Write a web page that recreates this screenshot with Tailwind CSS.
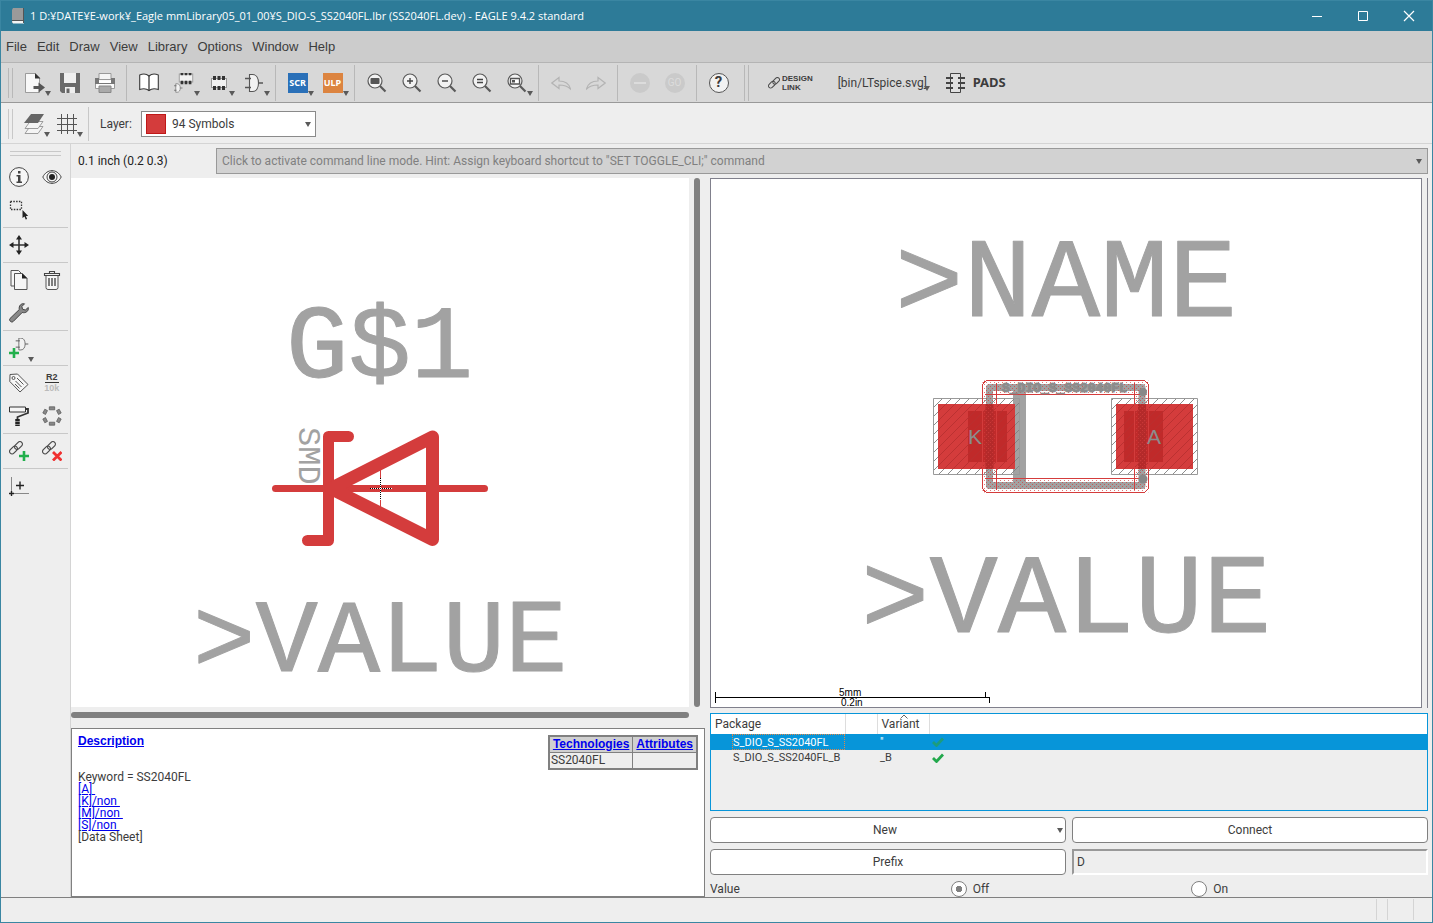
<!DOCTYPE html>
<html lang="en">
<head>
    <meta charset="UTF-8">
    <meta name="viewport" content="width=device-width, initial-scale=1.0">
    <title>EAGLE 9.4.2 standard</title>
    <script src="https://cdn.jsdelivr.net/npm/@tailwindcss/browser@4"></script>
</head>
<body class="h-screen bg-[#eeeeee] font-['Roboto',sans-serif] text-xs text-[#3c3c3c]">
    <!-- Shared symbols -->
    <svg class="hidden">
        <symbol id="caret" viewBox="0 0 6 5"><path d="M0 0h6L3 5z" fill="#5a5a5a"/></symbol>
        <symbol id="lens" viewBox="0 0 20 20">
            <path d="M12.500 12.500l6 6" stroke="#5a5a5a" stroke-width="2.200"/>
            <circle cx="8" cy="8" r="7" fill="#f2f2f2" stroke="#5a5a5a" stroke-width="1.200"/>
        </symbol>
        <symbol id="gate" viewBox="0 0 20 20">
            <path d="M5.500 1.500h3c4 0 6 4 6 8.500s-2 8.500-6 8.500h-3z" fill="#f2f2f2" stroke="#555" stroke-width="1.100"/>
            <path d="M1 5.500h6M1 14.500h6M14.500 10H19" stroke="#555" stroke-width="1.300"/>
        </symbol>
        <symbol id="chain" viewBox="0 0 20 20">
            <g fill="none" stroke="#4a4a4a" stroke-width="1.200">
                <rect x="-4.500" y="-2.500" width="9" height="5" rx="2.500" transform="translate(4.500 9) rotate(-45)"/>
                <rect x="-4.500" y="-2.500" width="9" height="5" rx="2.500" transform="translate(9.500 4.500) rotate(-45)"/>
            </g>
        </symbol>
        <symbol id="chip" viewBox="0 0 20 20">
            <rect x="2.500" y="5.500" width="15" height="9" fill="#f2f2f2" stroke="#999"/>
            <path d="M4 3h3v4H4zM8.500 3h3v4h-3zM13 3h3v4h-3zM4 13h3v4H4zM8.500 13h3v4h-3zM13 13h3v4h-3z" fill="#333"/>
        </symbol>
    </svg>

    <div class="flex h-full flex-col border border-[#3a86a2]">
        <!-- Title bar -->
        <header class="flex h-[30px] shrink-0 items-center bg-[#2d7b98] font-['Open_Sans',sans-serif] text-[11px] text-white">
            <svg class="ml-[11px] mr-1.5 h-4 w-3" viewBox="0 0 12 16">
                <path d="M0 2l1-2h11v15H0z" fill="#9a9a9a"/><path d="M0 13h12v2.500H1z" fill="#f4f4f4"/><path d="M0 12.500h12M11.500 0v15" stroke="#555"/>
            </svg>
            <h1 class="flex-1 truncate">1 D:¥DATE¥E-work¥_Eagle mmLibrary05_01_00¥S_DIO-S_SS2040FL.lbr (SS2040FL.dev) - EAGLE 9.4.2 standard</h1>
            <button aria-label="Minimize" class="flex h-full w-[46px] items-center justify-center"><svg class="size-3" viewBox="0 0 12 12"><path d="M1 6.500h10" stroke="#fff"/></svg></button>
            <button aria-label="Maximize" class="flex h-full w-[46px] items-center justify-center"><svg class="size-3" viewBox="0 0 12 12"><path d="M1.500 1.500h9v9h-9z" fill="none" stroke="#fff"/></svg></button>
            <button aria-label="Close" class="flex h-full w-[46px] items-center justify-center"><svg class="size-3" viewBox="0 0 12 12"><path d="M1 1l10 10M11 1L1 11" stroke="#fff" stroke-width="1.200"/></svg></button>
        </header>

        <!-- Menu -->
        <nav class="flex h-8 shrink-0 items-center gap-2.5 border-b border-[#b4b4b4] bg-[#cccccc] px-[5px] font-['Liberation_Sans',sans-serif] text-[13px]">
            <button>File</button>
            <button>Edit</button>
            <button>Draw</button>
            <button>View</button>
            <button>Library</button>
            <button>Options</button>
            <button>Window</button>
            <button>Help</button>
        </nav>

        <!-- Main toolbar -->
        <div class="flex h-10 shrink-0 items-center border-b border-[#999999] bg-[#d8d8d8] pl-[7px]">
            <div class="mr-1 h-[30px] w-[5px] border-x border-[#b8b8b8]"></div>
            <button aria-label="Open" class="relative flex h-full w-[35px] items-center justify-center">
                <svg class="size-5" viewBox="0 0 20 20"><path d="M.5.5H10l4.500 4.500v14.500H.5z" fill="#f8f8f8" stroke="#888" stroke-width=".8"/><path d="M10 0v5.500h5.500z" fill="#333"/><path d="M8.500 13h5V9.500l6.500 5-6.500 5V16h-5z" fill="#555"/></svg>
                <svg class="absolute bottom-[6px] right-px h-[5px] w-[6px]"><use href="#caret"/></svg>
            </button>
            <button aria-label="Save" class="flex h-full w-[35px] items-center justify-center">
                <svg class="size-5" viewBox="0 0 20 20"><path d="M0 0h20v20H2l-2-2z" fill="#6a6a6a"/><path d="M4 0h12v10H4zM5 14h10v6H5z" fill="#efefef"/><path d="M6.500 15.500h3V20h-3z" fill="#666"/></svg>
            </button>
            <button aria-label="Print" class="flex h-full w-[35px] items-center justify-center">
                <svg class="size-5" viewBox="0 0 20 20"><path d="M4 .5h12V7H4z" fill="#f5f5f5" stroke="#999"/><path d="M.5 6.500h19v9H.5z" fill="#fafafa" stroke="#999"/><path d="M0 5h4v3h12V5h4v6H0z" fill="#777"/><path d="M4 8h12v2H4z" fill="#fff"/><path d="M4 13h12v6.500H4z" fill="#aaa" stroke="#888"/></svg>
            </button>
            <div class="mx-1 h-9 w-px bg-[#b8b8b8]"></div>
            <button aria-label="Library" class="flex h-full w-[35px] items-center justify-center">
                <svg class="h-5 w-5" viewBox="0 0 20 20"><path d="M10 3C7.500.8 3.500.8.700 2v14.500c2.800-1 6.800-1 9.300 1 2.500-2 6.500-2 9.300-1V2c-2.800-1.200-6.800-1.200-9.300 1z" fill="#fff" stroke="#3a3a3a" stroke-width="1.100"/><path d="M10 3v15" stroke="#3a3a3a" stroke-width="1.300"/></svg>
            </button>
            <button aria-label="Device" class="relative flex h-full w-[35px] items-center justify-center">
                <svg class="size-5" viewBox="0 0 20 20"><svg x="3" y="-4" width="18" height="18"><use href="#chip"/></svg><svg x="-1" y="10" width="10" height="10"><use href="#gate"/></svg></svg>
                <svg class="absolute bottom-[6px] right-px h-[5px] w-[6px]"><use href="#caret"/></svg>
            </button>
            <button aria-label="Footprint" class="relative flex h-full w-[35px] items-center justify-center">
                <svg class="size-5"><use href="#chip"/></svg>
                <svg class="absolute bottom-[6px] right-px h-[5px] w-[6px]"><use href="#caret"/></svg>
            </button>
            <button aria-label="Symbol" class="relative flex h-full w-[35px] items-center justify-center">
                <svg class="size-5"><use href="#gate"/></svg>
                <svg class="absolute bottom-[6px] right-px h-[5px] w-[6px]"><use href="#caret"/></svg>
            </button>
            <div class="mx-1 h-9 w-px bg-[#b8b8b8]"></div>
            <button class="relative flex h-full w-[35px] items-center justify-center">
                <span class="flex size-5 items-center justify-center bg-[#2a70b8] font-['Noto_Sans',sans-serif] text-[9px] font-bold text-white">SCR</span>
                <svg class="absolute bottom-[6px] right-px h-[5px] w-[6px]"><use href="#caret"/></svg>
            </button>
            <button class="relative flex h-full w-[35px] items-center justify-center">
                <span class="flex size-5 items-center justify-center bg-[#dc8440] font-['Noto_Sans',sans-serif] text-[9px] font-bold text-white">ULP</span>
                <svg class="absolute bottom-[6px] right-px h-[5px] w-[6px]"><use href="#caret"/></svg>
            </button>
            <div class="mx-1 h-9 w-px bg-[#b8b8b8]"></div>
            <button aria-label="Fit" class="flex h-full w-[35px] items-center justify-center">
                <svg class="size-5" viewBox="0 0 20 20"><use href="#lens"/><rect x="3.500" y="5" width="9" height="6" rx="1" fill="#555"/></svg>
            </button>
            <button aria-label="Zoom in" class="flex h-full w-[35px] items-center justify-center">
                <svg class="size-5" viewBox="0 0 20 20"><use href="#lens"/><path d="M5 8h6M8 5v6" stroke="#444" stroke-width="1.400"/></svg>
            </button>
            <button aria-label="Zoom out" class="flex h-full w-[35px] items-center justify-center">
                <svg class="size-5" viewBox="0 0 20 20"><use href="#lens"/><path d="M5 8h6" stroke="#444" stroke-width="1.400"/></svg>
            </button>
            <button aria-label="Redraw" class="flex h-full w-[35px] items-center justify-center">
                <svg class="size-5" viewBox="0 0 20 20"><use href="#lens"/><path d="M5 6.500h6M5 9.500h6" stroke="#444" stroke-width="1.400"/></svg>
            </button>
            <button aria-label="Zoom select" class="relative flex h-full w-[35px] items-center justify-center">
                <svg class="size-5" viewBox="0 0 20 20"><use href="#lens"/><path d="M3.500 5.500h9v5.500h-9z" fill="#fff" stroke="#555" stroke-width="1.300"/><path d="M5 7h3v2.500H5z" fill="#555"/></svg>
                <svg class="absolute bottom-[6px] right-px h-[5px] w-[6px]"><use href="#caret"/></svg>
            </button>
            <div class="mx-1 h-9 w-px bg-[#b8b8b8]"></div>
            <button aria-label="Undo" class="flex h-full w-[35px] items-center justify-center">
                <svg class="size-5" viewBox="0 0 20 20"><path d="M.8 10L8 4.500v3.500c6 0 10 2 11.500 8-3-3-6-4-11.500-4v3.500z" fill="none" stroke="#b4b4b4" stroke-width="1.200"/></svg>
            </button>
            <button aria-label="Redo" class="flex h-full w-[35px] items-center justify-center">
                <svg class="size-5" viewBox="0 0 20 20"><path d="M19.200 10L12 4.500v3.500C6 8 2 10 .5 16c3-3 6-4 11.500-4v3.500z" fill="none" stroke="#b4b4b4" stroke-width="1.200"/></svg>
            </button>
            <div class="mx-1 h-9 w-px bg-[#b8b8b8]"></div>
            <button aria-label="Stop" class="flex h-full w-[35px] items-center justify-center">
                <svg class="size-5" viewBox="0 0 20 20"><circle cx="10" cy="10" r="10" fill="#cacaca"/><path d="M4 10h12" stroke="#dcdcdc" stroke-width="2"/></svg>
            </button>
            <button class="flex h-full w-[35px] items-center justify-center">
                <span class="flex size-5 items-center justify-center rounded-full bg-[#cacaca] text-[10px] text-[#dcdcdc]">GO</span>
            </button>
            <div class="mx-1 h-9 w-px bg-[#b8b8b8]"></div>
            <button class="flex h-full w-[35px] items-center justify-center">
                <span class="flex size-5 items-center justify-center rounded-full border border-[#555555] bg-[#f2f2f2] text-[15px] font-bold">?</span>
            </button>
            <div class="ml-2 mr-[7px] h-[36px] w-[5px] border-x border-[#b8b8b8]"></div>
            <button class="ml-3 flex items-center gap-[2px]">
                <svg class="size-3" viewBox="0 0 14 14"><use href="#chain" width="20" height="20"/></svg>
                <span class="flex flex-col text-left font-['Liberation_Sans',sans-serif] text-[8px]/[9px] font-bold"><span>DESIGN</span><span>LINK</span></span>
            </button>
            <button class="relative ml-[25px] w-[92px] text-left">[bin/LTspice.svg]
                <svg class="absolute bottom-0 right-0 h-[5px] w-[6px]"><use href="#caret"/></svg>
            </button>
            <button class="ml-4 flex items-center gap-2 font-['Noto_Sans',sans-serif] text-[13px] font-bold">
                <svg class="h-5 w-[19px]" viewBox="0 0 19 20"><path d="M4.500.5h10v19h-10z" fill="#e0e0e0" stroke="#444"/><path d="M0 5h7M0 10h7M0 15h7M12 5h7M12 10h7M12 15h7" stroke="#444" stroke-width="2"/></svg>
                PADS
            </button>
        </div>

        <!-- Layer toolbar -->
        <div class="flex h-[41px] shrink-0 items-center border-b border-[#d4d4d4] pl-[7px] pt-px">
            <div class="mr-1 h-[30px] w-[5px] border-x border-[#c8c8c8]"></div>
            <button aria-label="Layers" class="relative flex h-full w-[33px] items-center justify-center">
                <svg class="h-[22px] w-5" viewBox="0 0 20 22"><g fill="#f4f4f4" stroke="#888" stroke-width=".8"><path d="M1 20.500l5-7h13l-5 7z"/><path d="M1 15.500l5-7h13l-5 7z"/></g><path d="M0 10l7-9h13l-6 9z" fill="#666"/></svg>
                <svg class="absolute bottom-[6px] right-0 h-[5px] w-[6px]"><use href="#caret"/></svg>
            </button>
            <button aria-label="Grid" class="relative flex h-full w-[33px] items-center justify-center">
                <svg class="size-5" viewBox="0 0 20 20"><path d="M4.500 0v20M10.500 0v20M16.500 0v20M0 4.500h20M0 10.500h20M0 16.500h20" stroke="#555"/></svg>
                <svg class="absolute bottom-[6px] right-0 h-[5px] w-[6px]"><use href="#caret"/></svg>
            </button>
            <div class="ml-[5px] mr-[11px] h-[34px] w-px bg-[#c8c8c8]"></div>
            <label for="layer" class="w-[41px]">Layer:</label>
            <div class="relative">
                <select id="layer" class="h-[26px] w-[175px] appearance-none border border-[#8a8a8a] bg-white pl-[30px]"><option>94 Symbols</option></select>
                <span class="absolute left-[5px] top-[3px] size-5 border border-[#c01818] bg-[#d43c3c]"></span>
                <svg class="absolute right-[5px] top-[11px] h-[5px] w-[6px]"><use href="#caret"/></svg>
            </div>
        </div>

        <div class="flex min-h-0 flex-1">
            <!-- Tool palette -->
            <aside class="w-[70px] shrink-0 border-r border-[#d4d4d4] px-[2px]">
                <div class="mx-[7px] mb-1 mt-[7px] h-[5px] border-y border-[#c8c8c8]"></div>
                <div class="grid grid-cols-2 border-b border-[#c8c8c8] pb-px">
                    <button aria-label="Info" class="flex h-[33px] items-center justify-center"><svg class="size-5" viewBox="0 0 20 20"><circle cx="10" cy="10" r="9.400" fill="#f6f6f6" stroke="#444"/><path d="M9 4h2.500v2.500H9zM7.500 8h4v6.500H13V16H7.500v-1.500H9v-5H7.500z" fill="#444"/></svg></button>
                    <button aria-label="Show" class="flex h-[33px] items-center justify-center"><svg class="size-5" viewBox="0 0 20 20"><path d="M.8 10C5 1.500 15 1.500 19.200 10 15 18.500 5 18.500.8 10z" fill="#f6f6f6" stroke="#444"/><circle cx="10" cy="10" r="5" fill="none" stroke="#444"/><circle cx="10" cy="10" r="3" fill="#222"/></svg></button>
                    <button aria-label="Group" class="flex h-[33px] items-center justify-center"><svg class="size-5" viewBox="0 0 20 20"><path d="M1.500 1.500h11v8h-11z" fill="none" stroke="#333" stroke-width="1.300" stroke-dasharray="1.500 1.300"/><path d="M13.500 10v8l2-1.500 1.200 3 1.400-.6-1.200-2.900h2.300z" fill="#222"/></svg></button>
                </div>
                <div class="grid grid-cols-2 border-b border-[#c8c8c8] pb-px">
                    <button aria-label="Move" class="flex h-[33px] items-center justify-center"><svg class="size-5" viewBox="0 0 20 20"><path d="M10 2v16M2 10h16" stroke="#333" stroke-width="1.600"/><path d="M10 0l3 4.500H7zM10 20l3-4.500H7zM0 10l4.500-3v6zM20 10l-4.500-3v6z" fill="#222"/></svg></button>
                </div>
                <div class="grid grid-cols-2 border-b border-[#c8c8c8] pb-px">
                    <button aria-label="Copy" class="flex h-[33px] items-center justify-center"><svg class="size-5" viewBox="0 0 20 20"><path d="M2 .5h7.500L13 4v12H2z" fill="#f6f6f6" stroke="#555"/><path d="M5.500 3.500h7.500l5 5v11H5.500z" fill="#f6f6f6" stroke="#555"/><path d="M13 3v5.500h5.500z" fill="#222"/></svg></button>
                    <button aria-label="Delete" class="flex h-[33px] items-center justify-center"><svg class="size-5" viewBox="0 0 20 20"><path d="M4 5.500v12q0 2 2 2h8q2 0 2-2v-12" fill="#f6f6f6" stroke="#555"/><path d="M2.500 3.500h15v2h-15zM7.500 3.500v-2h5v2" fill="none" stroke="#444" stroke-width="1.100"/><path d="M7 8v8M10 8v8M13 8v8" stroke="#555" stroke-width="1.500"/></svg></button>
                    <button aria-label="Change" class="flex h-[33px] items-center justify-center"><svg class="size-5" viewBox="0 0 20 20"><path d="M19.300 4.500l-3 2.500-2.800-.8-.6-2.700L15.500.8C12 0 9.500 3 10.300 6.500L1 15.500c-1.500 1.700 1.300 4.700 3.200 3l9-9c3.500 1 6.800-1.500 6.100-5z" fill="#888" stroke="#444"/></svg></button>
                </div>
                <div class="grid grid-cols-2 border-b border-[#c8c8c8] pb-px">
                    <button aria-label="Add" class="relative flex h-[33px] items-center justify-center">
                        <svg class="size-5" viewBox="0 0 20 20"><svg x="6" y="-1" width="14" height="14"><use href="#gate"/></svg><path d="M0 15h10M5 10v10" stroke="#22b04c" stroke-width="2.600"/></svg>
                        <svg class="absolute bottom-[2px] right-[2px] h-[5px] w-[6px]"><use href="#caret"/></svg>
                    </button>
                </div>
                <div class="grid grid-cols-2 border-b border-[#c8c8c8] pb-px">
                    <button aria-label="Name" class="flex h-[33px] items-center justify-center"><svg class="size-5" viewBox="0 0 20 20"><path d="M1 1.500l7.500-.5L19 11.500l-8 7.500L.8 8.500z" fill="#f6f6f6" stroke="#555"/><circle cx="4.500" cy="5" r="1.500" fill="none" stroke="#555"/><path d="M8 5l6.500 6.500M6.500 8l6 6M6 11l4.500 4.500" stroke="#555"/></svg></button>
                    <button class="flex h-[33px] flex-col items-center justify-center font-['Liberation_Sans',sans-serif] text-[9px]/[10px] font-bold"><span class="border-b border-[#333333] px-px">R2</span><span class="text-[#bbbbbb]">10k</span></button>
                    <button aria-label="Paint roller" class="flex h-[33px] items-center justify-center"><svg class="size-5" viewBox="0 0 20 20"><path d="M.5 1h16v5H.5z" fill="#f6f6f6" stroke="#333"/><path d="M17 3h2v4L8.500 11v3" fill="none" stroke="#333" stroke-width="1.800"/><path d="M8.500 13v7" stroke="#222" stroke-width="4.500" stroke-dasharray="2.500 .5"/></svg></button>
                    <button aria-label="Replace" class="flex h-[33px] items-center justify-center"><svg class="size-5" viewBox="0 0 20 20"><g fill="#888" stroke="#555" stroke-width=".7"><path d="M7.300.8h5.400v3H7.300zM7.300 16.200h5.400v3H7.300z"/><path d="M.8 7l2-3.800 2.700 1.400L3.500 8.500zM19.200 7l-2-3.800-2.700 1.400L16.500 8.500zM.8 13l2 3.800 2.700-1.400L3.500 11.500zM19.200 13l-2 3.800-2.700-1.400L16.500 11.500z"/></g></svg></button>
                </div>
                <div class="grid grid-cols-2 border-b border-[#c8c8c8] pb-px">
                    <button aria-label="Link" class="flex h-[33px] items-center justify-center"><svg class="size-5" viewBox="0 0 20 20"><use href="#chain"/><path d="M10 15h10M15 10v10" stroke="#22b04c" stroke-width="2.600"/></svg></button>
                    <button aria-label="Unlink" class="flex h-[33px] items-center justify-center"><svg class="size-5" viewBox="0 0 20 20"><use href="#chain"/><path d="M11 11l8.500 8.500M19.500 11L11 19.500" stroke="#f03030" stroke-width="2.800"/></svg></button>
                </div>
                <div class="grid grid-cols-2 pb-px">
                    <button aria-label="Origin" class="flex h-[33px] items-center justify-center"><svg class="size-5" viewBox="0 0 20 20"><path d="M2.500 1v17M2 17.500h18" stroke="#888"/><path d="M7 9.500h8M11 5.500v8M0 17.500h5M2.500 15v5" stroke="#222" stroke-width="1.400"/></svg></button>
                </div>
            </aside>

            <main class="flex min-w-0 flex-1 flex-col pr-1">
                <div class="flex h-[34px] shrink-0 items-center pl-[7px]">
                    <label for="cli" class="w-[138px] text-[#222222]">0.1 inch (0.2 0.3)</label>
                    <div class="relative flex-1">
                        <input id="cli" class="block h-[26px] w-full border border-[#999999] bg-[#d2d2d2] px-[5px] placeholder:text-[#808080]" placeholder="Click to activate command line mode. Hint: Assign keyboard shortcut to &quot;SET TOGGLE_CLI;&quot; command">
                        <svg class="absolute right-[6px] top-[11px] h-[5px] w-[6px]"><use href="#caret"/></svg>
                    </div>
                </div>

                <div class="grid min-h-0 flex-1 grid-cols-[634fr_718fr] gap-x-[5px]">
                    <!-- Symbol and description -->
                    <section class="flex min-h-0 flex-col">
                        <div class="flex min-h-0 flex-1 gap-[5px] pr-[5px]">
                            <svg class="h-full min-w-0 flex-1 bg-white" viewBox="71 178 618 529">
                                <g font-family="'Liberation Mono', monospace" fill="#a2a2a2">
                                    <g font-size="104" stroke="#a2a2a2" stroke-linejoin="round">
                                        <text x="286" y="377">G$1</text>
                                        <text x="193" y="671">&gt;VALUE</text>
                                    </g>
                                    <text transform="translate(299 427) rotate(90)" font-size="32">SMD</text>
                                </g>
                                <g fill="none" stroke="#d43c3c" stroke-linecap="round" stroke-linejoin="round">
                                    <path d="M275.500 488.500h209" stroke-width="7"/>
                                    <path d="M348.500 436.500h-20v104H307.500" stroke-width="11"/>
                                    <path d="M331 488.500l101.500-51.500v102.500z" stroke-width="13"/>
                                    <path d="M380.500 468v40" stroke-width="1"/>
                                </g>
                                <g shape-rendering="crispEdges">
                                    <path d="M380.500 478v22M370 488.500h22" stroke="#fff"/>
                                    <path d="M380.500 478v22M370 488.500h22" stroke="#000" stroke-dasharray="1 1"/>
                                </g>
                            </svg>
                            <div class="w-[6px] rounded-full bg-[#808080]"></div>
                        </div>
                        <div class="mb-[10px] mr-4 mt-[5px] h-[6px] shrink-0 rounded-full bg-[#808080]"></div>
                        <div class="flex h-[169px] shrink-0 items-start justify-between border border-[#808080] bg-white px-[6px] pt-1">
                            <div>
                                <a href="#" class="font-['Liberation_Sans',sans-serif] font-bold text-[#0000ee] underline">Description</a>
                                <div class="mt-[22px] leading-3">
                                    <p>Keyword = SS2040FL</p>
                                    <p><a href="#" class="whitespace-pre text-[#0000ee] underline">[A] </a></p>
                                    <p><a href="#" class="whitespace-pre text-[#0000ee] underline">[K]/non </a></p>
                                    <p><a href="#" class="whitespace-pre text-[#0000ee] underline">[M]/non </a></p>
                                    <p><a href="#" class="whitespace-pre text-[#0000ee] underline">[S]/non </a></p>
                                    <p>[Data Sheet]</p>
                                </div>
                            </div>
                            <table class="mt-[2px] border-2 border-[#808080] text-left leading-[15px]">
                                <tr class="bg-[#d0d0d0] font-['Liberation_Sans',sans-serif]">
                                    <th class="border border-[#808080] px-[3px]"><a href="#" class="text-[#0000ee] underline">Technologies</a></th>
                                    <th class="border border-[#808080] px-[3px]"><a href="#" class="text-[#0000ee] underline">Attributes</a></th>
                                </tr>
                                <tr class="bg-[#eeeeee]">
                                    <td class="border border-[#808080] px-px">SS2040FL</td>
                                    <td class="border border-[#808080]"></td>
                                </tr>
                            </table>
                        </div>
                    </section>

                    <!-- Package and variants -->
                    <section class="flex min-h-0 flex-col">
                        <div class="flex min-h-0 flex-1 border-r border-[#80808c] pr-[5px]">
                            <svg class="h-full min-w-0 flex-1 border border-[#80808c] bg-white" viewBox="711 179 710 528">
                                <defs>
                                    <pattern id="hatch" width="9" height="9" patternUnits="userSpaceOnUse"><path d="M-1 10L10-1" stroke="#808080" stroke-width=".9"/></pattern>
                                    <pattern id="hatch-dark" width="9" height="9" patternUnits="userSpaceOnUse"><path d="M-1 10L10-1" stroke="#b83030" stroke-width=".9"/></pattern>
                                    <pattern id="dots" width="4" height="4" patternUnits="userSpaceOnUse"><path d="M0 .5h1M2 2.500h1" stroke="#d43c3c" stroke-opacity=".7"/></pattern>
                                </defs>
                                <g font-family="'Liberation Mono', monospace" font-size="114" fill="#a2a2a2" stroke="#a2a2a2" stroke-linejoin="round">
                                    <text x="895" y="316">&gt;NAME</text>
                                    <text x="861" y="632">&gt;VALUE</text>
                                </g>
                                <!-- package outline -->
                                <path d="M989.500 387.500h152.500v98H989.500z" fill="none" stroke="#a2a2a2" stroke-width="7" stroke-linejoin="round"/>
                                <path d="M1019.500 391v92" stroke="#a2a2a2" stroke-width="13"/>
                                <!-- pads -->
                                <path d="M933.500 398.500h86v76h-86zM1111.500 398.500h86v76h-86z" fill="url(#hatch)" stroke="#999"/>
                                <g fill="#d43c3c">
                                    <path d="M938 404h77v65h-77zM1116 404h77v65h-77z"/>
                                    <path d="M968 411h39v51h-39zM1124 411h39v51h-39z" fill="#c02a2a"/>
                                    <path d="M985.500 404h8v65h-8zM1138 404h8v65h-8z" fill="#b42a2a"/>
                                    <path d="M938 404h77v65h-77zM1116 404h77v65h-77z" fill="url(#hatch-dark)"/>
                                </g>
                                <!-- keepout -->
                                <path d="M982.500 380.500h166v112h-166zM996.500 394.500v84h138v-84z" fill="url(#dots)" fill-rule="evenodd"/>
                                <g fill="none" stroke="#d43c3c" shape-rendering="crispEdges">
                                    <rect x="982.500" y="380.500" width="166" height="112" rx="6"/>
                                    <path d="M996.500 383v107M1134.500 383v107M985 394.500h161M985 478.500h161"/>
                                </g>
                                <circle cx="1143" cy="392" r="4" fill="#888"/><circle cx="1143" cy="479" r="4.500" fill="#888"/>
                                <g fill="#8c8c8c">
                                    <text x="1002" y="392" font-family="'Liberation Mono', monospace" font-size="13" font-weight="bold" stroke="#8c8c8c">S_DIO_S_SS2040FL</text>
                                    <g font-family="'Liberation Sans', sans-serif" font-size="21"><text x="968" y="444">K</text><text x="1147" y="444">A</text></g>
                                </g>
                                <!-- scale -->
                                <path d="M715.500 692v11M715 697.500h275M985.500 692v6M989.500 697v6" stroke="#000" shape-rendering="crispEdges"/>
                                <g font-family="'Liberation Sans', sans-serif" font-size="10" fill="#000"><text x="839" y="696">5mm</text><text x="841" y="706">0.2in</text></g>
                            </svg>
                        </div>
                        <div class="mt-[5px] h-[98px] shrink-0 border border-[#0795d9]">
                            <table class="w-full table-fixed text-left leading-4">
                                <colgroup><col class="w-[134px]"><col class="w-8"><col class="w-[52px]"><col></colgroup>
                                <thead>
                                    <tr class="h-5 bg-white">
                                        <th class="border-r border-[#dddddd] pl-1 font-normal">Package</th>
                                        <th class="border-r border-[#dddddd]"></th>
                                        <th class="relative border-r border-[#dddddd] pl-1 font-normal">Variant
                                            <svg class="absolute left-[22px] top-0 h-[5px] w-2" viewBox="0 0 8 5"><path d="M.5 4.500L4 1l3.500 3.500" fill="none" stroke="#666"/></svg>
                                        </th>
                                        <th></th>
                                    </tr>
                                </thead>
                                <tbody>
                                    <tr class="bg-[#0795d9] text-[11px]/[16px] text-white">
                                        <td class="pl-[21px]"><div class="h-4 whitespace-nowrap border border-dotted border-[#e08848] leading-[15px]">S_DIO_S_SS2040FL</div></td>
                                        <td></td>
                                        <td class="pl-[3px]">"</td>
                                        <td class="pl-[3px]"><svg class="h-[10px] w-3" viewBox="0 0 12 10"><path d="M1 5l3.500 3.500L11 1.500" fill="none" stroke="#1d9c7c" stroke-width="2.800"/></svg></td>
                                    </tr>
                                    <tr class="text-[11px]/[16px]">
                                        <td class="whitespace-nowrap pl-[22px]">S_DIO_S_SS2040FL_B</td>
                                        <td></td>
                                        <td class="pl-[3px]">_B</td>
                                        <td class="pl-[3px]"><svg class="h-[10px] w-3" viewBox="0 0 12 10"><path d="M1 5l3.500 3.500L11 1.500" fill="none" stroke="#22a84c" stroke-width="2.800"/></svg></td>
                                    </tr>
                                </tbody>
                            </table>
                        </div>
                        <div class="mt-[6px] grid shrink-0 grid-cols-2 gap-[6px]">
                            <button class="relative h-[26px] rounded border border-[#808080] bg-white pr-[6px]">New
                                <svg class="absolute right-[2px] top-[10px] h-[5px] w-[6px]"><use href="#caret"/></svg>
                            </button>
                            <button class="h-[26px] rounded border border-[#808080] bg-white">Connect</button>
                            <button id="prefix" class="h-[26px] rounded border border-[#808080] bg-white">Prefix</button>
                            <input aria-labelledby="prefix" value="D" class="h-[26px] border-2 border-b-white border-l-[#999999] border-r-white border-t-[#999999] px-[3px]">
                        </div>
                        <div class="mt-[5px] grid h-[17px] shrink-0 grid-cols-3 items-center gap-1">
                            <span>Value</span>
                            <label class="flex items-center gap-[6px]"><input type="radio" name="value" checked class="size-4 appearance-none rounded-full border border-[#808080] bg-white checked:bg-[radial-gradient(circle,#808080_3px,#fff_3px)]">Off</label>
                            <label class="flex items-center gap-[6px]"><input type="radio" name="value" class="size-4 appearance-none rounded-full border border-[#808080] bg-white checked:bg-[radial-gradient(circle,#808080_3px,#fff_3px)]">On</label>
                        </div>
                    </section>
                </div>
            </main>
        </div>

        <!-- Status bar -->
        <footer class="flex h-[25px] shrink-0 justify-end border-t border-[#808080] pr-[18px] pt-px">
            <div class="mr-[10px] h-[21px] w-px bg-[#d4d4d4]"></div>
            <div class="h-[21px] w-[27px] border-x border-[#d4d4d4]"></div>
        </footer>
    </div>
</body>
</html>
